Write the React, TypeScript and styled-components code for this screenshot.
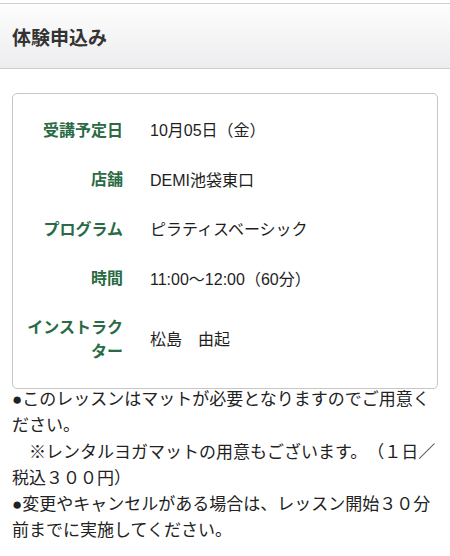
import React from 'react';
import styled, { createGlobalStyle } from 'styled-components';

const rows = [
  { label: '受講予定日', value: '10月05日（金）' },
  { label: '店舗', value: 'DEMI池袋東口' },
  { label: 'プログラム', value: 'ピラティスベーシック' },
  { label: '時間', value: '11:00〜12:00（60分）' },
  { label: 'インストラクター', value: '松島　由起' },
];

const notes = [
  '●このレッスンはマットが必要となりますのでご用意ください。',
  '　※レンタルヨガマットの用意もございます。（１日／税込３００円）',
  '●変更やキャンセルがある場合は、レッスン開始３０分前までに実施してください。',
];

const GlobalStyle = createGlobalStyle`
  body {
    margin: 0;
    background: #fff;
    font-family: "Liberation Sans", "Noto Sans CJK JP", sans-serif;
    color: #222;
    text-spacing-trim: space-all;
  }
`;

const Page = styled.div`
  padding-top: 3px;
`;

const Header = styled.header`
  height: 64px;
  display: flex;
  align-items: center;
  padding: 0 12px;
  border-top: 1px solid #cfcfcf;
  border-bottom: 1px solid #cfcfcf;
  background: linear-gradient(to bottom, #fdfdfd, #ededef);
`;

const Title = styled.h1`
  margin: 0;
  font-size: 19px;
  font-weight: bold;
  color: #333;
`;

const Body = styled.div`
  padding: 24px 12px 0;
`;

const Card = styled.div`
  border: 1px solid #c6c6c6;
  border-radius: 5px;
  padding: 12px 0;
  display: grid;
  grid-template-columns: 110px 1fr;
  column-gap: 27px;
  align-items: center;
`;

const Label = styled.div`
  padding: 12px 0;
  text-align: right;
  font-size: 16px;
  line-height: 24px;
  font-weight: bold;
  color: #2a6b45;
  word-break: break-all;
`;

const Value = styled.div`
  padding: 12px 0;
  font-size: 16px;
  line-height: 25.5px;
  color: #1e1e1e;
`;

const Notes = styled.div`
  margin-top: -2px;
  font-size: 17px;
  line-height: 26.3px;
  color: #222;
`;

const Note = styled.p`
  margin: 0;
`;

export default function App() {
  return (
    <Page>
      <GlobalStyle />
      <Header>
        <Title>体験申込み</Title>
      </Header>
      <Body>
        <Card>
          {rows.map((row) => (
            <React.Fragment key={row.label}>
              <Label>{row.label}</Label>
              <Value>{row.value}</Value>
            </React.Fragment>
          ))}
        </Card>
        <Notes>
          {notes.map((n) => (
            <Note key={n}>{n}</Note>
          ))}
        </Notes>
      </Body>
    </Page>
  );
}
